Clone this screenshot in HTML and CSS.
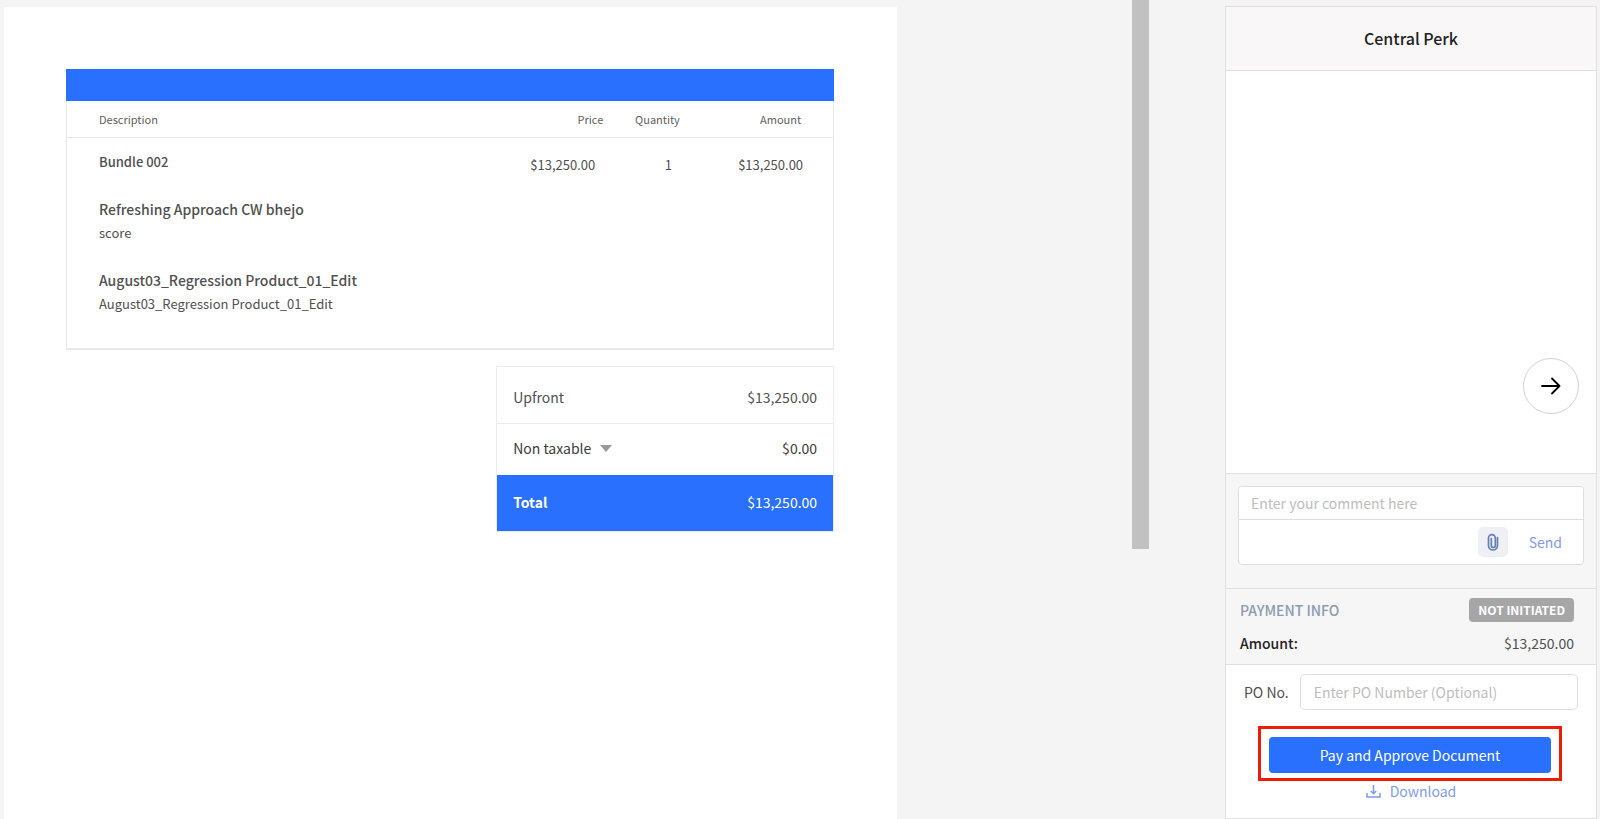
FILE: index.html
```html
<!DOCTYPE html>
<html lang="en">
<head>
<meta charset="utf-8">
<title>Central Perk</title>
<link rel="stylesheet" href="styles.css">
</head>
<body>
<div class="app">
  <main class="viewer">
    <article class="paper">
      <section class="items">
        <div class="items-banner"></div>
        <table class="items-table">
          <colgroup><col class="col-desc"><col class="col-price"><col class="col-qty"><col class="col-amount"></colgroup>
          <thead>
            <tr><th scope="col">Description</th><th scope="col">Price</th><th scope="col">Quantity</th><th scope="col">Amount</th></tr>
          </thead>
          <tbody>
            <tr>
              <td>
                <div class="product bundle"><strong>Bundle 002</strong></div>
                <div class="product"><strong>Refreshing Approach CW bhejo</strong><span>score</span></div>
                <div class="product"><strong>August03_Regression Product_01_Edit</strong><span>August03_Regression Product_01_Edit</span></div>
              </td>
              <td class="price">$13,250.00</td>
              <td class="qty">1</td>
              <td>$13,250.00</td>
            </tr>
          </tbody>
        </table>
      </section>
      <section class="totals">
        <div class="total-row upfront"><span>Upfront</span><span>$13,250.00</span></div>
        <div class="total-row tax">
          <button class="tax-toggle" type="button">Non taxable
            <svg width="12" height="7" viewBox="0 0 12 7" aria-hidden="true"><path d="M0 0h12L6 7z" fill="#999"/></svg>
          </button>
          <span>$0.00</span>
        </div>
        <div class="total-row grand"><strong>Total</strong><span>$13,250.00</span></div>
      </section>
    </article>
    <div class="scroll-track"><div class="scroll-thumb"></div></div>
  </main>
  <aside class="panel">
    <header class="panel-header"><h1>Central Perk</h1></header>
    <div class="thread">
      <button class="next" type="button" aria-label="Next">
        <svg width="20" height="18" viewBox="0 0 20 18" fill="none" stroke="#000" stroke-width="1.800" stroke-linecap="round" stroke-linejoin="round" aria-hidden="true"><path d="M1 9h17.500M11 1.500L18.500 9L11 16.500"/></svg>
      </button>
    </div>
    <section class="comment">
      <div class="comment-box">
        <input class="comment-input" type="text" placeholder="Enter your comment here" aria-label="Comment">
        <div class="comment-actions">
          <button class="attach" type="button" aria-label="Attach file">
            <svg width="12" height="18" viewBox="0 0 12 18" fill="none" stroke="#6480b4" stroke-width="1.700" stroke-linecap="round" aria-hidden="true"><path d="M1.500 5v7.500a4.500 4.500 0 0 0 9 0V4.500M1.500 5a3.400 3.400 0 0 1 6.800 0v7.500a2 2 0 0 1-4 0V5.500"/></svg>
          </button>
          <button class="send" type="button">Send</button>
        </div>
      </div>
    </section>
    <section class="payment">
      <div class="payment-row"><h2>PAYMENT INFO</h2><span class="badge">NOT INITIATED</span></div>
      <div class="payment-row amount"><strong>Amount:</strong><span>$13,250.00</span></div>
    </section>
    <form class="approve">
      <div class="po"><label for="po">PO No.</label><input id="po" type="text" placeholder="Enter PO Number (Optional)"></div>
      <div class="highlight"><button class="pay" type="button">Pay and Approve Document</button></div>
      <a class="download" href="#">
        <svg width="15" height="13" viewBox="0 0 15 13" fill="none" stroke="#7f9bea" stroke-width="1.500" aria-hidden="true"><path d="M1 8v4h13V8M7.500 0v8.500M4.800 6l2.700 2.700L10.200 6"/></svg>
        Download
      </a>
    </form>
  </aside>
</div>
</body>
</html>
```
FILE: styles.css
```css
* {
  box-sizing: border-box;
}

body {
  margin: 0;
  background: #f4f4f5;
  color: #505050;
  font: 14px/24px "Noto Sans CJK SC", "Noto Sans", sans-serif;
}

button,
input {
  font: inherit;
}

h1,
h2 {
  margin: 0;
  font-size: inherit;
  font-weight: 500;
}

strong {
  font-weight: 500;
}

.app {
  display: grid;
  grid-template-columns: minmax(0, 1fr) 372px;
  column-gap: 76px;
  height: 100vh;
  padding-right: 3px;
}

.viewer {
  display: flex;
  justify-content: space-between;
  min-height: 0;
  padding-left: 4px;
}

.paper {
  flex: 0 0 78%;
  margin-top: 7px;
  padding: 62px 63px 0 62px;
  background: #fff;
}

.scroll-track {
  flex: 0 0 17px;
}

.scroll-thumb {
  height: 67%;
  background: #c1c1c1;
}

.items {
  border: 1px solid #e9e9e9;
  border-top: 0;
  border-bottom-width: 2px;
}

.items-banner {
  height: 32px;
  margin: 0 -1px;
  background: #2970ff;
}

.items-table {
  width: 100%;
  border-collapse: collapse;
  table-layout: fixed;
  font-size: 13px;
}

.col-desc { width: 54%; }
.col-price { width: 16%; }
.col-qty { width: 10%; }
.col-amount { width: 20%; }

.items-table th {
  padding: 6px 0;
  border-bottom: 1px solid #e9e9e9;
  color: #606060;
  font-size: 11px;
  font-weight: 400;
  text-align: right;
}

.items-table td {
  padding: 15px 0 0;
  text-align: right;
  vertical-align: top;
}

.items-table th:first-child,
.items-table td:first-child {
  padding-left: 32px;
  text-align: left;
}

.items-table th:last-child {
  padding-right: 32px;
}

.items-table td:last-child {
  padding-right: 30px;
}

.items-table td:first-child {
  padding-top: 12px;
  padding-bottom: 9px;
}

.items-table .price,
.items-table .qty {
  padding-right: 8px;
}

.product {
  margin-bottom: 23px;
}

.product strong,
.product span {
  display: block;
}

.product strong {
  font-size: 14px;
}

.bundle strong {
  font-size: 13px;
}

.totals {
  width: 44%;
  margin: 16px 0 0 auto;
  border: 1px solid #ececec;
}

.total-row {
  display: flex;
  align-items: center;
  justify-content: space-between;
  padding: 12px 16px 15px;
}

.upfront {
  padding-top: 18px;
  padding-bottom: 14px;
  border-bottom: 1px solid #ececec;
}

.tax {
  color: #3c3c3c;
}

.tax-toggle {
  display: flex;
  align-items: center;
  gap: 9px;
  padding: 0;
  border: 0;
  background: none;
  color: inherit;
}

.grand {
  padding-top: 15px;
  padding-bottom: 17px;
  background: #2970ff;
  color: #fff;
}

.grand strong {
  font-weight: 700;
}

.panel {
  display: flex;
  flex-direction: column;
  margin: 6px 0 0;
  border: 1px solid #e0e0e0;
  background: #fff;
  min-height: 0;
}

.panel-header {
  padding: 19px 20px 20px;
  border-bottom: 1px solid #e0e0e0;
  background: #f9f7f8;
  color: #222;
  font-size: 16px;
  text-align: center;
}

.thread {
  display: flex;
  flex: 1;
  align-items: flex-end;
  justify-content: flex-end;
  padding: 0 17px 59px;
}

.next {
  display: flex;
  align-items: center;
  justify-content: center;
  width: 56px;
  height: 56px;
  border: 1px solid #d2d2d2;
  border-radius: 50%;
  background: #fff;
}

.comment {
  padding: 12px 12px 23px;
  border-top: 1px solid #e0e0e0;
  background: #f6f6f6;
}

.comment-box {
  border: 1px solid #dedede;
  border-radius: 4px;
  background: #fff;
  overflow: hidden;
}

.comment-input {
  display: block;
  width: 100%;
  height: 33px;
  padding: 0 12px;
  border: 0;
  border-bottom: 1px solid #dedede;
}

input::placeholder {
  color: #bdbdbd;
}

.comment-actions {
  display: flex;
  align-items: center;
  justify-content: flex-end;
  gap: 21px;
  padding: 7px 21px 7px;
}

.attach {
  display: flex;
  align-items: center;
  justify-content: center;
  width: 30px;
  height: 30px;
  padding: 0;
  border: 0;
  border-radius: 5px;
  background: #efeff6;
}

.send {
  padding: 0;
  border: 0;
  background: none;
  color: #7f9bea;
}

.payment {
  padding: 9px 22px 9px 14px;
  border-top: 1px solid #e0e0e0;
  border-bottom: 1px solid #e0e0e0;
  background: #f6f6f6;
}

.payment-row {
  display: flex;
  align-items: center;
  justify-content: space-between;
}

.payment h2 {
  color: #8c9bb0;
}

.badge {
  padding: 0 9px;
  border-radius: 4px;
  background: #a6a6a6;
  color: #fff;
  font-size: 12px;
  font-weight: 700;
}

.amount {
  margin-top: 9px;
}

.amount strong {
  color: #222;
}

.approve {
  display: flex;
  flex-direction: column;
  padding: 9px 18px 17px;
}

.po {
  display: flex;
  align-items: center;
  gap: 11px;
}

.po input {
  flex: 1;
  min-width: 0;
  height: 36px;
  padding: 0 13px;
  border: 1px solid #dedede;
  border-radius: 5px;
}

.highlight {
  margin: 16px 16px 0 14px;
  padding: 8px 8px 5px;
  border: 3px solid #ee1c00;
}

.pay {
  display: block;
  width: 100%;
  height: 36px;
  padding: 0;
  border: 0;
  border-radius: 4px;
  background: #2970ff;
  color: #fff;
}

.download {
  display: flex;
  align-items: center;
  align-self: center;
  gap: 9px;
  line-height: 20px;
  color: #7f9bea;
  text-decoration: none;
}
```
